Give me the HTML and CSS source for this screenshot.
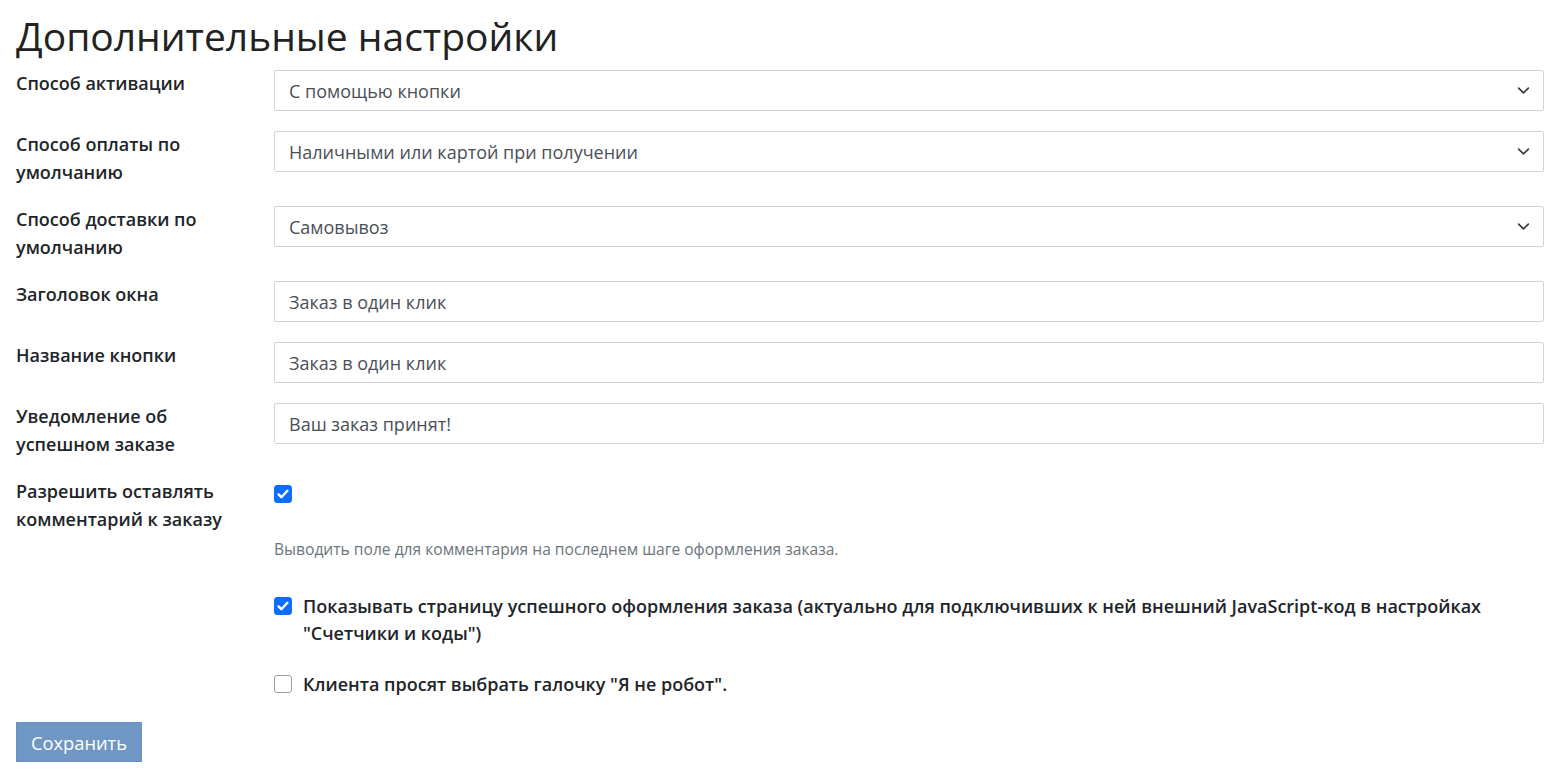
FILE: index.html
```html
<!DOCTYPE html>
<html lang="ru">
<head>
<meta charset="utf-8">
<title>Дополнительные настройки</title>
<link rel="stylesheet" href="styles.css">
</head>
<body>
<div class="page">
  <h1 class="title">Дополнительные настройки</h1>
  <form class="form">
    <div class="row">
      <label class="label">Способ активации</label>
      <div class="control">
        <div class="select">
          <span>С помощью кнопки</span>
          <svg class="chev" viewBox="0 0 16 16" width="13" height="13"><path d="M2 5l6 6 6-6" fill="none" stroke="#343a40" stroke-width="2" stroke-linecap="round" stroke-linejoin="round"/></svg>
        </div>
      </div>
    </div>
    <div class="row">
      <label class="label">Способ оплаты по умолчанию</label>
      <div class="control">
        <div class="select">
          <span>Наличными или картой при получении</span>
          <svg class="chev" viewBox="0 0 16 16" width="13" height="13"><path d="M2 5l6 6 6-6" fill="none" stroke="#343a40" stroke-width="2" stroke-linecap="round" stroke-linejoin="round"/></svg>
        </div>
      </div>
    </div>
    <div class="row">
      <label class="label">Способ доставки по умолчанию</label>
      <div class="control">
        <div class="select">
          <span>Самовывоз</span>
          <svg class="chev" viewBox="0 0 16 16" width="13" height="13"><path d="M2 5l6 6 6-6" fill="none" stroke="#343a40" stroke-width="2" stroke-linecap="round" stroke-linejoin="round"/></svg>
        </div>
      </div>
    </div>
    <div class="row">
      <label class="label">Заголовок окна</label>
      <div class="control"><div class="input">Заказ в один клик</div></div>
    </div>
    <div class="row">
      <label class="label">Название кнопки</label>
      <div class="control"><div class="input">Заказ в один клик</div></div>
    </div>
    <div class="row">
      <label class="label">Уведомление об успешном заказе</label>
      <div class="control"><div class="input">Ваш заказ принят!</div></div>
    </div>
    <div class="row">
      <label class="label">Разрешить оставлять комментарий к заказу</label>
      <div class="control">
        <span class="check checked"><svg viewBox="0 0 20 20" width="18" height="18"><path d="M4.5 10.5l3.5 3.5 7.5-8" fill="none" stroke="#fff" stroke-width="3" stroke-linecap="round" stroke-linejoin="round"/></svg></span>
        <p class="help">Выводить поле для комментария на последнем шаге оформления заказа.</p>
      </div>
    </div>
    <div class="options">
      <div class="option">
        <span class="check checked"><svg viewBox="0 0 20 20" width="18" height="18"><path d="M4.5 10.5l3.5 3.5 7.5-8" fill="none" stroke="#fff" stroke-width="3" stroke-linecap="round" stroke-linejoin="round"/></svg></span>
        <span class="option-text">Показывать страницу успешного оформления заказа (актуально для подключивших к ней внешний JavaScript-код в настройках "Счетчики и коды")</span>
      </div>
      <div class="option">
        <span class="check"></span>
        <span class="option-text">Клиента просят выбрать галочку "Я не робот".</span>
      </div>
    </div>
    <div class="actions">
      <button type="button" class="btn">Сохранить</button>
    </div>
  </form>
</div>
</body>
</html>
```
FILE: styles.css
```css
* { box-sizing: border-box; }
html, body { margin: 0; padding: 0; background: #fff; }
body {
  font-family: "Open Sans", "Noto Sans", sans-serif;
  color: #212529;
  font-size: 18px;
}
.page { padding: 0 11px 0 16px; }
.title {
  margin: 0;
  padding-top: 12px;
  font-size: 39px;
  font-weight: 400;
  line-height: 48px;
  color: #222;
}
.form { margin-top: 10px; }
.row {
  display: grid;
  grid-template-columns: 258px 1fr;
  margin-bottom: 20px;
}
.label {
  font-weight: 600;
  font-size: 18px;
  line-height: 27.5px;
  padding-right: 20px;
  color: #212529;
}
.select, .input {
  height: 41px;
  border: 1px solid #ced4da;
  border-radius: 2px;
  padding: 0 14px;
  display: flex;
  align-items: center;
  justify-content: space-between;
  color: #495057;
  font-size: 18px;
}
.chev { flex: none; margin-right: -1px; }
.check {
  display: inline-flex;
  width: 18px;
  height: 18px;
  border: 1px solid #9aa0a6;
  border-radius: 3px;
  background: #fff;
  flex: none;
  align-items: center;
  justify-content: center;
}
.check.checked { background: #0d6efd; border-color: #0d6efd; }
.check svg { display: block; }
.row .check { margin-top: 7px; }
.help {
  margin: 31px 0 0;
  font-size: 15.6px;
  line-height: 21px;
  color: #6c757d;
}
.options {
  padding-left: 258px;
  padding-top: 13px;
}
.option {
  display: flex;
  gap: 11px;
  margin-bottom: 24px;
}
.option .check { margin-top: 4px; }
.option-text {
  font-weight: 600;
  font-size: 18px;
  line-height: 27px;
}
.btn {
  font-family: inherit;
  font-size: 18.3px;
  color: #fff;
  background: #7097c3;
  border: 1px solid #6a90bd;
  border-radius: 0;
  height: 40px;
  padding: 0 14px;
}
```
